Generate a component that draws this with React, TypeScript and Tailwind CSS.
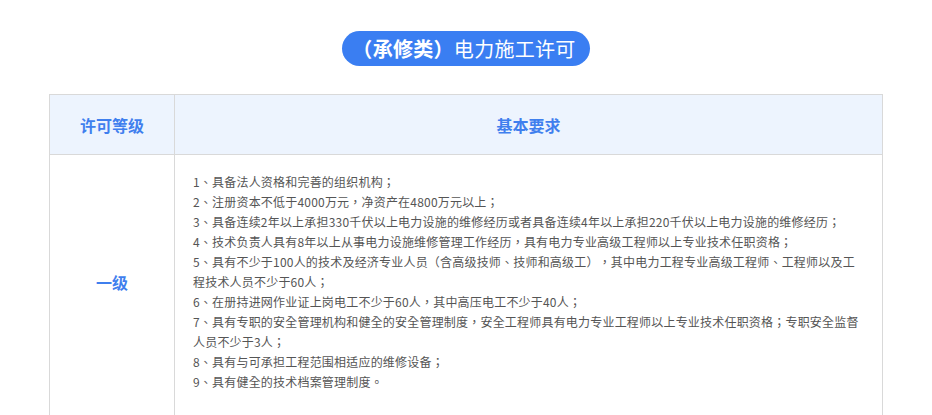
/**
 * LicenseTable
 *
 * 承修类电力施工许可 — requirement table for each license grade.
 */

const FONT = "font-['Noto_Sans_CJK_TC','Noto_Sans_CJK_SC',sans-serif] [text-spacing-trim:space-all]";

const requirements: string[][] = [
    ['1、具备法人资格和完善的组织机构；'],
    ['2、注册资本不低于4000万元，净资产在4800万元以上；'],
    ['3、具备连续2年以上承担330千伏以上电力设施的维修经历或者具备连续4年以上承担220千伏以上电力设施的维修经历；'],
    ['4、技术负责人具有8年以上从事电力设施维修管理工作经历，具有电力专业高级工程师以上专业技术任职资格；'],
    [
        '5、具有不少于100人的技术及经济专业人员（含高级技师、技师和高级工），其中电力工程专业高级工程师、工程师以及工',
        '程技术人员不少于60人；',
    ],
    ['6、在册持进网作业证上岗电工不少于60人，其中高压电工不少于40人；'],
    [
        '7、具有专职的安全管理机构和健全的安全管理制度，安全工程师具有电力专业工程师以上专业技术任职资格；专职安全监督',
        '人员不少于3人；',
    ],
    ['8、具有与可承担工程范围相适应的维修设备；'],
    ['9、具有健全的技术档案管理制度。'],
];

export default function App() {
    return (
        <div className={`w-[932px] h-[415px] overflow-hidden bg-white ${FONT}`}>
            {/* Title pill */}
            <div className="flex justify-center pt-[31px]">
                <div className="h-[35px] pl-[10px] pr-[14px] rounded-full bg-[#3a7ef2] flex items-center text-white text-[20px] leading-none tracking-[0.3px]">
                    <span className="font-bold">（承修类）</span>
                    <span>电力施工许可</span>
                </div>
            </div>

            {/* Table */}
            <div className="mx-[49px] mt-[28px] border-t border-l border-[#d9d9d9] grid grid-cols-[125px_1fr]">
                {/* Header */}
                <div className="h-[60px] bg-[#edf4fe] border-r border-b border-[#d9d9d9] flex items-center justify-center text-[16px] font-bold text-[#3f7fee]">
                    许可等级
                </div>
                <div className="h-[60px] bg-[#edf4fe] border-r border-b border-[#d9d9d9] flex items-center justify-center text-[16px] font-bold text-[#3f7fee]">
                    基本要求
                </div>

                {/* 一级 */}
                <div className="border-r border-b border-[#d9d9d9] flex items-center justify-center text-[16px] font-bold text-[#3f7fee] pb-[10px]">
                    一级
                </div>
                <div className="border-r border-b border-[#d9d9d9] pl-[18px] pr-[18px] pt-[17px] pb-[26px] text-[12px] leading-[20px] tracking-[0.2px] text-[#555555]">
                    {requirements.map((lines, i) => (
                        <div key={i}>
                            {lines.map((line, j) => (
                                <p key={j} className="whitespace-nowrap">{line}</p>
                            ))}
                        </div>
                    ))}
                </div>
            </div>
        </div>
    );
}
